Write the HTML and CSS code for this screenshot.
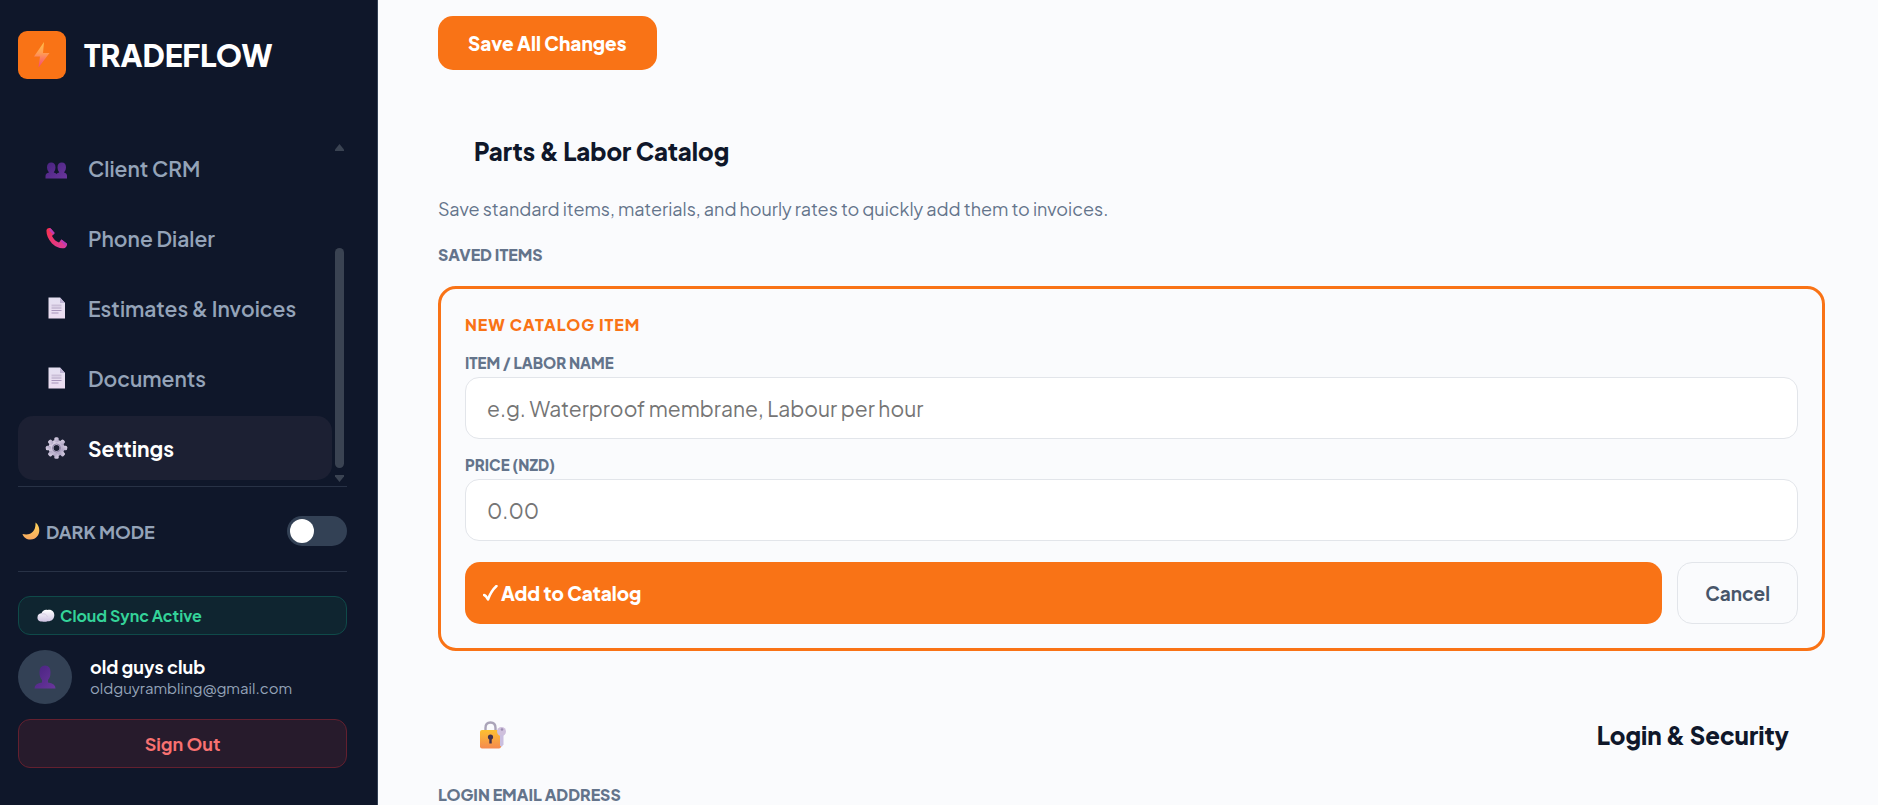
FILE: index.html
```html
<!DOCTYPE html>
<html lang="en">

<head>
    <meta charset="UTF-8">
    <meta name="viewport" content="width=device-width, initial-scale=1.0">
    <title>TradeFlow - Settings</title>
    <link rel="stylesheet" href="styles.css">
</head>

<body>
    <!-- shared gradients and the page icon -->
    <svg class="defs" width="0" height="0" aria-hidden="true">
        <defs>
            <linearGradient id="bolt" x1="0" y1="0" x2="0" y2="1">
                <stop offset="0" stop-color="#ffc24a" />
                <stop offset=".45" stop-color="#ff9a55" />
                <stop offset="1" stop-color="#f2467c" />
            </linearGradient>
            <linearGradient id="purple" x1="0" y1="0" x2="1" y2="1">
                <stop offset="0" stop-color="#482380" />
                <stop offset="1" stop-color="#6a369c" />
            </linearGradient>
            <linearGradient id="phone" x1="0" y1="0" x2="1" y2="1">
                <stop offset="0" stop-color="#f8314b" />
                <stop offset="1" stop-color="#d93da0" />
            </linearGradient>
            <linearGradient id="paper" x1="0" y1="0" x2="0" y2="1">
                <stop offset="0" stop-color="#e4e0f1" />
                <stop offset="1" stop-color="#ecdcf0" />
            </linearGradient>
            <linearGradient id="gear" x1="0" y1="0" x2="1" y2="1">
                <stop offset="0" stop-color="#ddd5e8" />
                <stop offset="1" stop-color="#aaa0c0" />
            </linearGradient>
            <linearGradient id="moon" x1="0" y1="0" x2="0" y2="1">
                <stop offset="0" stop-color="#ffd55a" />
                <stop offset="1" stop-color="#f8a860" />
            </linearGradient>
            <linearGradient id="cloud" x1="0" y1="0" x2="0" y2="1">
                <stop offset="0" stop-color="#ffffff" />
                <stop offset="1" stop-color="#cfc4e2" />
            </linearGradient>
            <linearGradient id="lock" x1="0" y1="0" x2="0" y2="1">
                <stop offset="0" stop-color="#fcc030" />
                <stop offset="1" stop-color="#f58a50" />
            </linearGradient>
            <symbol id="page" viewBox="0 0 22 22">
                <path d="M3 .5h11.5L19.500 6v15.500H3z" fill="url(#paper)" />
                <path d="M14.500.5V6h5z" fill="#bdb3d3" />
                <path d="M6 8.500h10M6 11h10" stroke="#cbbfd8" stroke-width="2" />
                <path d="M6 13.500h10M6 16h7" stroke="#a793ba" stroke-width="1" />
            </symbol>
        </defs>
    </svg>

    <div class="app">
        <aside class="sidebar">
            <div class="brand">
                <div class="brand-logo">
                    <svg width="16" height="26" viewBox="0 0 16 26"><path d="M10 0 0 14.500h6L4.500 25.500 15.500 11H9z" fill="url(#bolt)" /></svg>
                </div>
                <span class="brand-name">TRADEFLOW</span>
            </div>

            <div class="nav-wrap">
                <nav class="nav">
                    <a href="#" class="nav-item">
                        <svg class="nav-icon" viewBox="0 0 22 22"><path d="M0 21.500v-2.500q0-3 3.500-3.500Q1.500 13.500 1.500 10.500C1.500 7 3 5.500 5.700 5.500S10 7 10 10.500q0 3-1.800 5 1.800.300 2.800 1.500 1-1.200 2.800-1.500-1.800-2-1.800-5c0-3.500 1.500-5 4.300-5s4.200 1.500 4.200 5q0 3-2 5 3 .5 3 3.500v2.500z" fill="url(#purple)" /></svg>
                        Client CRM
                    </a>
                    <a href="#" class="nav-item">
                        <svg class="nav-icon" viewBox="0 0 22 22"><path d="M1 3C1.500 1 3.500.500 5 1.200L9.200 6 6.500 9Q9 14 13.500 15.500L16 12.500l5.500 4.200Q22 19 19.500 21 13 22.500 6.500 16.500.500 10 1 3z" fill="url(#phone)" /><path d="m5 1.200 4.200 4.800-1.500 1.800L3.500 3zM16 12.500l5.500 4.200-1.200 2.200-5.500-4.900z" fill="#b93cb4" /></svg>
                        Phone Dialer
                    </a>
                    <a href="#" class="nav-item">
                        <svg class="nav-icon"><use href="#page" /></svg>
                        Estimates &amp; Invoices
                    </a>
                    <a href="#" class="nav-item">
                        <svg class="nav-icon"><use href="#page" /></svg>
                        Documents
                    </a>
                    <a href="#" class="nav-item active">
                        <svg class="nav-icon" viewBox="0 0 22 22">
                            <circle cx="11" cy="11" r="5.500" fill="none" stroke="url(#gear)" stroke-width="5" />
                            <g fill="url(#gear)">
                                <rect id="tooth" x="8.800" y=".3" width="4.400" height="5" rx="1.500" />
                                <use href="#tooth" transform="rotate(45 11 11)" />
                                <use href="#tooth" transform="rotate(90 11 11)" />
                                <use href="#tooth" transform="rotate(135 11 11)" />
                                <use href="#tooth" transform="rotate(180 11 11)" />
                                <use href="#tooth" transform="rotate(225 11 11)" />
                                <use href="#tooth" transform="rotate(270 11 11)" />
                                <use href="#tooth" transform="rotate(315 11 11)" />
                            </g>
                            <circle cx="11" cy="11" r="4" fill="none" stroke="#8d83a5" stroke-width="1" />
                        </svg>
                        Settings
                    </a>
                </nav>
                <div class="scrollbar" aria-hidden="true">
                    <svg width="9" height="7" viewBox="0 0 9 7"><path d="M4.500 0 9 5.500V7H0V5.500z" /></svg>
                    <div class="scroll-thumb"></div>
                    <svg width="9" height="7" viewBox="0 0 9 7"><path d="M4.500 7 9 1.500V0H0v1.500z" /></svg>
                </div>
            </div>

            <div class="theme-row">
                <label class="theme-label" for="dark">
                    <svg width="18" height="18" viewBox="0 0 18 18"><path d="M13.500.500C20 5 18 17.500 8.500 17.500 4.500 17.500 1.500 15.500.500 12 9 14 14 9 13.500.500z" fill="url(#moon)" /></svg>
                    DARK MODE
                </label>
                <input type="checkbox" id="dark" class="switch">
            </div>

            <div class="account">
                <div class="sync">
                    <svg width="18" height="13" viewBox="0 0 18 13"><path d="M5 12.500C1.500 12.500.200 10.500.500 8 .700 5.500 2.500 4.300 4.500 4.300 5.500 1.500 8 .300 10.500 1 15 .200 17.500 3 17.300 6.500 17 10.500 14 12.500 10.500 12.200 9 12.800 7 12.800 5 12.500z" fill="url(#cloud)" /><path d="M5 5q4-1 5.500 3" fill="none" stroke="#d9d0e6" /></svg>
                    Cloud Sync Active
                </div>
                <div class="user">
                    <div class="avatar">
                        <svg width="24" height="24" viewBox="0 0 24 24"><path d="M1.500 23.500q0-5 7.500-6V15Q6.500 12.500 6.500 7 6.500.500 12 .500T17.500 7q0 5.500-2.500 8v2.500q7.500 1 7.500 6z" fill="url(#purple)" /></svg>
                    </div>
                    <div>
                        <p class="user-name">old guys club</p>
                        <p class="user-mail">oldguyrambling@gmail.com</p>
                    </div>
                </div>
                <button type="button" class="sign-out">Sign Out</button>
            </div>
        </aside>

        <main class="content">
            <button type="button" class="btn btn-save">Save All Changes</button>

            <section class="catalog">
                <h2 class="section-title">Parts &amp; Labor Catalog</h2>
                <p class="hint">Save standard items, materials, and hourly rates to quickly add them to invoices.</p>
                <h3 class="group-label">SAVED ITEMS</h3>

                <form class="card">
                    <h4 class="card-title">NEW CATALOG ITEM</h4>
                    <label class="field-label" for="item">ITEM / LABOR NAME</label>
                    <input class="field" id="item" type="text" placeholder="e.g. Waterproof membrane, Labour per hour">
                    <label class="field-label" for="price">PRICE (NZD)</label>
                    <input class="field" id="price" type="text" inputmode="decimal" placeholder="0.00">
                    <div class="actions">
                        <button type="button" class="btn btn-add">
                            <svg width="15" height="16" viewBox="0 0 15 16"><path d="M1 10q2 .5 4 4.500Q8 6 13.500 1" fill="none" stroke="#fff" stroke-width="2.500" stroke-linecap="round" stroke-linejoin="round" /></svg>
                            Add to Catalog
                        </button>
                        <button type="button" class="btn btn-cancel">Cancel</button>
                    </div>
                </form>
            </section>

            <section>
                <div class="security-head">
                    <svg width="28" height="28" viewBox="0 0 28 28">
                        <path d="M6.500 11V7q0-5.500 5-5.500t5 5.500v4" fill="none" stroke="#aaa4b8" stroke-width="2.400" />
                        <rect x="1" y="9" width="21" height="18.500" rx="2" fill="url(#lock)" />
                        <circle cx="11.500" cy="16" r="2.600" fill="#40304c" />
                        <path d="M10.300 16h2.400v6.500h-2.400z" fill="#40304c" />
                        <circle cx="22.500" cy="10.500" r="4.500" fill="#cfc0dd" />
                        <circle cx="23" cy="8.500" r="1.300" fill="#9c8db2" />
                        <path d="M21 14h3.500v9.500L22.500 26 21 24.500z" fill="#cabfe0" />
                    </svg>
                    <h2 class="section-title plain">Login &amp; Security</h2>
                </div>
                <h3 class="group-label">LOGIN EMAIL ADDRESS</h3>
            </section>
        </main>
    </div>
</body>

</html>
```
FILE: styles.css
```css
* {
    margin: 0;
    padding: 0;
    box-sizing: border-box;
}

body {
    font-family: "Plus Jakarta Sans", Inter, "Liberation Sans", sans-serif;
    background: #fafbfd;
    color: #0f172a;
}

button,
input {
    font-family: inherit;
}

a {
    text-decoration: none;
}

.defs {
    position: absolute;
}

.app {
    display: flex;
    height: 100vh;
    overflow: hidden;
}

/* sidebar */
.sidebar {
    width: 378px;
    flex-shrink: 0;
    display: flex;
    flex-direction: column;
    padding: 31px 30px 37px 18px;
    background: #0f172a;
    border-right: 1px solid #334155;
}

.brand {
    display: flex;
    align-items: center;
    gap: 18px;
    margin-bottom: 57px;
}

.brand-logo {
    display: flex;
    align-items: center;
    justify-content: center;
    width: 48px;
    height: 48px;
    border-radius: 9px;
    background: #f97316;
}

.brand-name {
    font-size: 30px;
    font-weight: 800;
    line-height: 48px;
    color: #fff;
}

.nav-wrap {
    display: flex;
    flex: 1;
    gap: 3px;
    min-height: 0;
    overflow: hidden;
}

.nav {
    flex: 1;
    display: flex;
    flex-direction: column;
    gap: 6px;
}

.nav-item {
    display: flex;
    align-items: center;
    gap: 20px;
    height: 64px;
    flex-shrink: 0;
    padding: 0 27px;
    border-radius: 15px;
    font-size: 21px;
    font-weight: 600;
    white-space: nowrap;
    color: #94a3b8;
}

.nav-item.active {
    background: #1c2033;
    color: #fff;
    font-weight: 700;
}

.nav-icon {
    width: 23px;
    height: 22px;
    flex-shrink: 0;
}

.scrollbar {
    display: flex;
    flex-direction: column;
    width: 12px;
    padding: 8px 0 4px;
    fill: #3a4352;
}

.scroll-thumb {
    width: 9px;
    height: 220px;
    margin: auto 0 7px;
    border-radius: 5px;
    background: #3a4352;
}

.theme-row {
    display: flex;
    align-items: center;
    justify-content: space-between;
    height: 86px;
    padding: 4px 0 0 4px;
    border-top: 1px solid #283246;
    border-bottom: 1px solid #283246;
}

.theme-label {
    display: flex;
    align-items: center;
    gap: 6px;
    font-size: 18px;
    font-weight: 700;
    color: #94a3b8;
}

.switch {
    appearance: none;
    width: 60px;
    height: 30px;
    padding: 3px;
    border-radius: 15px;
    background: #334155;
}

.switch::before {
    content: "";
    display: block;
    width: 24px;
    height: 24px;
    border-radius: 50%;
    background: #fff;
}

.switch:checked::before {
    margin-left: auto;
}

.account {
    display: flex;
    flex-direction: column;
    gap: 15px;
    padding-top: 24px;
}

.sync {
    display: flex;
    align-items: center;
    gap: 5px;
    height: 39px;
    padding: 0 18px;
    border: 1px solid #0f4a49;
    border-radius: 12px;
    background: #0f2530;
    font-size: 16px;
    font-weight: 700;
    color: #34d399;
}

.user {
    display: flex;
    align-items: center;
    gap: 18px;
}

.avatar {
    display: flex;
    align-items: center;
    justify-content: center;
    width: 54px;
    height: 54px;
    border-radius: 50%;
    background: #334155;
}

.user-name {
    font-size: 18px;
    font-weight: 700;
    line-height: 22px;
    color: #fff;
}

.user-mail {
    font-size: 15px;
    line-height: 20px;
    color: #94a3b8;
}

.sign-out {
    height: 49px;
    border: 1px solid #63202f;
    border-radius: 12px;
    background: #271b2c;
    font-size: 18px;
    font-weight: 700;
    color: #f87171;
}

/* settings page */
.content {
    flex: 1;
    min-width: 0;
    padding: 16px 53px 0 60px;
    overflow: hidden;
}

.btn {
    border: 0;
    border-radius: 15px;
    font-size: 19px;
    font-weight: 800;
}

.btn-save {
    height: 54px;
    padding: 0 30px;
    background: #f97316;
    color: #fff;
}

.catalog {
    padding-top: 63px;
    margin-bottom: 66px;
}

.section-title {
    padding-left: 36px;
    font-size: 24px;
    font-weight: 800;
    line-height: 36px;
}

.section-title.plain {
    padding-left: 0;
}

.hint {
    margin: 25px 0 19px;
    font-size: 18px;
    line-height: 30px;
    color: #64748b;
}

.group-label {
    font-size: 16px;
    font-weight: 800;
    line-height: 24px;
    color: #64748b;
}

.card {
    display: flex;
    flex-direction: column;
    margin-top: 19px;
    padding: 24px;
    border: 3px solid #f97316;
    border-radius: 18px;
    background: #fafbfd;
}

.card-title {
    font-size: 16px;
    font-weight: 800;
    line-height: 24px;
    letter-spacing: 1px;
    color: #f97316;
}

.field-label {
    margin: 16px 0 4px;
    font-size: 15px;
    font-weight: 800;
    line-height: 20px;
    color: #64748b;
}

.field {
    width: 100%;
    height: 62px;
    padding: 0 21px;
    border: 1px solid #e2e5ea;
    border-radius: 14px;
    background: #fff;
    font-size: 21px;
    color: #0f172a;
}

.field::placeholder {
    color: #757575;
}

.actions {
    display: flex;
    gap: 15px;
    margin-top: 21px;
}

.btn-add {
    display: flex;
    align-items: center;
    gap: 3px;
    flex: 1;
    height: 62px;
    padding: 0 18px;
    background: #f97316;
    color: #fff;
}

.btn-cancel {
    padding: 0 27px;
    border: 1px solid #e2e5ea;
    background: #fafbfd;
    color: #475569;
    font-weight: 700;
}

.security-head {
    display: flex;
    align-items: center;
    justify-content: space-between;
    margin-bottom: 30px;
    padding: 0 36px 0 41px;
}
```
